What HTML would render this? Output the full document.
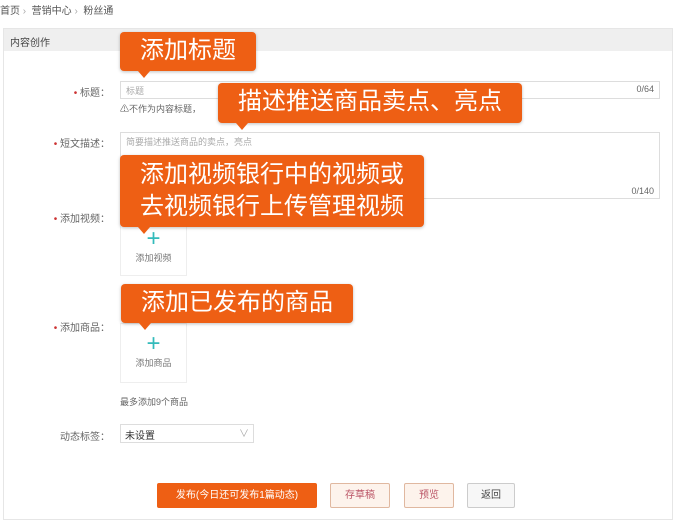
<!DOCTYPE html>
<html><head><meta charset="utf-8"><style>
*{margin:0;padding:0;box-sizing:border-box}
body{width:687px;height:518px;background:#fff;position:relative;overflow:hidden;font-family:"Liberation Sans","Noto Sans CJK SC",sans-serif;font-size:11px;color:#555}
.a{position:absolute}
.tip{position:absolute;background:#ee5f14;color:#fff;border-radius:4px;font-size:24px;line-height:30px;padding:4px 20px;box-shadow:0 1px 3px rgba(0,0,0,.25);white-space:nowrap}
.tip:after{content:"";position:absolute;left:18px;bottom:-7px;border-left:6px solid transparent;border-right:6px solid transparent;border-top:7px solid #ee5f14}
.lbl{position:absolute;text-align:right;width:110px;left:0;font-size:10px;color:#666}
.lbl b{color:#c33;font-weight:normal}
.inp{position:absolute;border:1px solid #ddd;background:#fff}
.box{position:absolute;border:1px solid #eee;background:#fff;text-align:center;font-size:9px;color:#777}
.box i{display:block;font-style:normal;color:#3bb;font-size:24px;line-height:24px;margin-top:12px;font-weight:300}
.btn{position:absolute;top:483px;height:25px;line-height:23px;text-align:center;font-size:10px;border:1px solid #ccc;border-radius:2px}
</style></head><body>
<div class="a" style="left:0;top:2px;font-size:10px;color:#555">首页 <span style="color:#aaa">›</span> &nbsp;营销中心 <span style="color:#aaa">›</span> &nbsp;粉丝通</div>
<div class="a" style="left:3px;top:28px;width:670px;height:492px;border:1px solid #e6e6e6"></div>
<div class="a" style="left:4px;top:29px;width:668px;height:22px;background:#efefef;padding:5px 6px;font-size:10px;color:#444">内容创作</div>

<div class="lbl" style="top:84px"><b>•</b> 标题：</div>
<div class="inp" style="left:120px;top:81px;width:540px;height:18px;padding:2px 5px;font-size:9px;color:#aaa">标题<span style="float:right;color:#666">0/64</span></div>
<div class="a" style="left:120px;top:102px;font-size:9px;color:#666">⚠不作为内容标题，</div>

<div class="lbl" style="top:135px"><b>•</b> 短文描述：</div>
<div class="inp" style="left:120px;top:132px;width:540px;height:67px;padding:2px 5px;font-size:9px;color:#aaa">简要描述推送商品的卖点，亮点<span class="a" style="right:5px;bottom:2px;color:#666">0/140</span></div>

<div class="lbl" style="top:210px"><b>•</b> 添加视频：</div>
<div class="box" style="left:120px;top:222px;width:67px;height:54px"><i style="margin-top:4px">+</i>添加视频</div>

<div class="lbl" style="top:319px"><b>•</b> 添加商品：</div>
<div class="box" style="left:120px;top:323px;width:67px;height:60px"><i style="margin-top:8px">+</i>添加商品</div>
<div class="a" style="left:120px;top:395px;font-size:9px;color:#666">最多添加9个商品</div>

<div class="lbl" style="top:428px">动态标签：</div>
<div class="inp" style="left:120px;top:424px;width:134px;height:19px;padding:2px 4px;font-size:10px;color:#333">未设置<span class="a" style="right:4px;top:0;color:#aaa">∨</span></div>

<div class="btn" style="left:157px;width:160px;background:#ee5f14;border-color:#ee5f14;color:#fff">发布(今日还可发布1篇动态)</div>
<div class="btn" style="left:330px;width:60px;background:#fdf3ec;border-color:#e0b8a0;color:#b56">存草稿</div>
<div class="btn" style="left:404px;width:50px;background:#fdf3ec;border-color:#e0b8a0;color:#b56">预览</div>
<div class="btn" style="left:467px;width:48px;background:#f7f7f7;color:#444">返回</div>

<div class="tip" style="left:120px;top:32px;height:39px">添加标题</div>
<div class="tip" style="left:218px;top:83px;height:40px">描述推送商品卖点、亮点</div>
<div class="tip" style="left:120px;top:155px;height:72px;line-height:32px">添加视频银行中的视频或<br>去视频银行上传管理视频</div>
<div class="tip" style="left:121px;top:284px;height:39px">添加已发布的商品</div>
</body></html>
